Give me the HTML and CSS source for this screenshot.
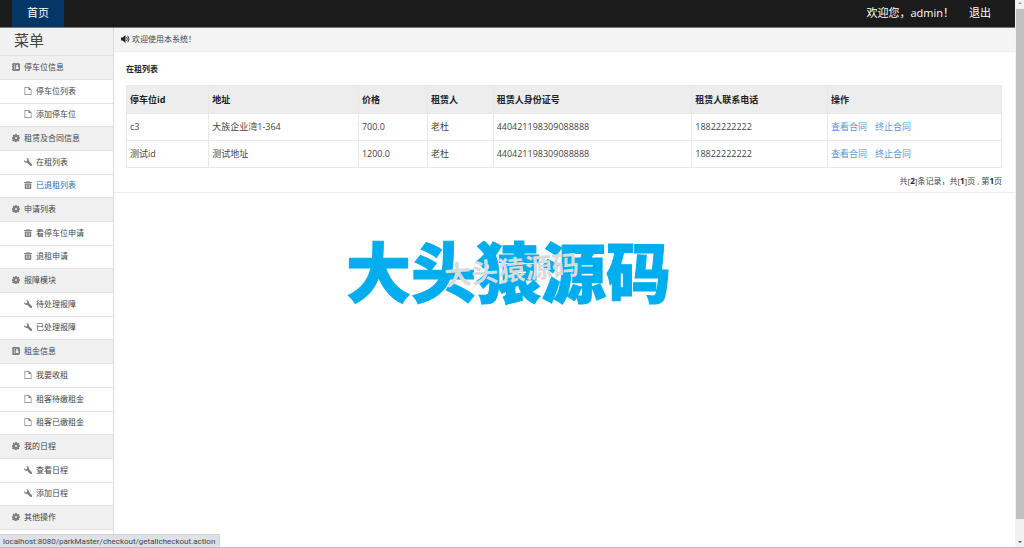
FILE: index.html
```html
<!DOCTYPE html>
<html lang="zh-CN">
<head>
<meta charset="utf-8">
<title>在租列表</title>
<link rel="stylesheet" href="styles.css">
</head>
<body>
<svg class="defs" aria-hidden="true">
  <symbol id="book" viewBox="0 0 16 16"><path fill-rule="evenodd" d="M2 0h12l2 2v12l-2 2H2l-2-2v-2h2v-1H0V9h2V8H0V6h2V5H0V2zM5 2.500v11h1v-11zM10 3.500a2 2 0 0 1 1.200 3.600L13 8.500V12H7.500V8.500l1.500-1.400A2 2 0 0 1 10 3.500z"/></symbol>
  <symbol id="file" viewBox="0 0 16 16"><path fill-rule="evenodd" d="M1 0h9l5 5v11H1zM2.300 1.300v13.400h11.400V6H9V1.300z"/></symbol>
  <symbol id="cog" viewBox="0 0 16 16"><path fill-rule="evenodd" d="M6.500 0h3l.5 2 1.500.6L13.300 1.500l1.700 2-1 1.700.5 1.300 1.500.5v2.500l-1.700.6-.6 1.400 1 1.700-2 2-1.800-1-1.400.6-.5 1.700h-3l-.5-1.700-1.400-.6-1.800 1-2-2 1-1.700L.8 9.900 0 9.500V6.700l1.700-.5.6-1.400-1-1.700 2-2 1.700 1L6 2zM8 6a2 2 0 1 0 0 4 2 2 0 0 0 0-4z"/></symbol>
  <symbol id="wrench" viewBox="0 0 16 16"><path d="M4.500 0a5 5 0 0 1 5.300 6.200L15.500 12a2.300 2.300 0 0 1-3.300 3.300L6.200 9.700A5 5 0 0 1 0 4l3 2.800L6 6l.7-2.800z"/></symbol>
  <symbol id="trash" viewBox="0 0 16 16"><path fill-rule="evenodd" d="M5 0h6v2h5v2H0V2h5zM6.200 1.200V2h3.600v-.8zM1.500 5h13v10l-1 1h-11l-1-1zM4 7v7h1V7zM7.500 7v7h1V7zM11 7v7h1V7z"/></symbol>
  <symbol id="sound" viewBox="0 0 18 16"><path d="M0 5h3l6-5v16l-6-5H0z"/><path fill="none" stroke="currentColor" stroke-width="1.800" d="M11 4q3 4 0 8M13.500 1.500q5 6.500 0 13"/></symbol>
</svg>
<div class="page">
  <div class="app">
    <header class="topbar">
      <a class="home" href="#">首页</a>
      <span class="welcome">欢迎您，admin！</span>
      <a class="logout" href="#">退出</a>
    </header>
    <div class="body">
      <nav class="sidebar">
        <h1 class="menu-title">菜单</h1>
        <section class="group">
          <h2 class="group-title"><svg class="icon"><use href="#book"/></svg>停车位信息</h2>
          <a class="item" href="#"><svg class="icon"><use href="#file"/></svg>停车位列表</a>
          <a class="item" href="#"><svg class="icon"><use href="#file"/></svg>添加停车位</a>
        </section>
        <section class="group">
          <h2 class="group-title"><svg class="icon"><use href="#cog"/></svg>租赁及合同信息</h2>
          <a class="item" href="#"><svg class="icon"><use href="#wrench"/></svg>在租列表</a>
          <a class="item" href="#"><svg class="icon"><use href="#trash"/></svg><span class="current">已退租列表</span></a>
        </section>
        <section class="group">
          <h2 class="group-title"><svg class="icon"><use href="#cog"/></svg>申请列表</h2>
          <a class="item" href="#"><svg class="icon"><use href="#trash"/></svg>看停车位申请</a>
          <a class="item" href="#"><svg class="icon"><use href="#trash"/></svg>退租申请</a>
        </section>
        <section class="group">
          <h2 class="group-title"><svg class="icon"><use href="#cog"/></svg>报障模块</h2>
          <a class="item" href="#"><svg class="icon"><use href="#wrench"/></svg>待处理报障</a>
          <a class="item" href="#"><svg class="icon"><use href="#wrench"/></svg>已处理报障</a>
        </section>
        <section class="group">
          <h2 class="group-title"><svg class="icon"><use href="#book"/></svg>租金信息</h2>
          <a class="item" href="#"><svg class="icon"><use href="#file"/></svg>我要收租</a>
          <a class="item" href="#"><svg class="icon"><use href="#file"/></svg>租客待缴租金</a>
          <a class="item" href="#"><svg class="icon"><use href="#file"/></svg>租客已缴租金</a>
        </section>
        <section class="group">
          <h2 class="group-title"><svg class="icon"><use href="#cog"/></svg>我的日程</h2>
          <a class="item" href="#"><svg class="icon"><use href="#wrench"/></svg>查看日程</a>
          <a class="item" href="#"><svg class="icon"><use href="#wrench"/></svg>添加日程</a>
        </section>
        <section class="group">
          <h2 class="group-title"><svg class="icon"><use href="#cog"/></svg>其他操作</h2>
        </section>
      </nav>
      <main class="main">
        <div class="notice"><svg class="icon sound"><use href="#sound"/></svg>欢迎使用本系统！</div>
        <section class="panel">
          <h2 class="panel-title">在租列表</h2>
          <table class="list">
            <colgroup><col class="c-id"><col class="c-addr"><col class="c-price"><col class="c-name"><col class="c-card"><col class="c-phone"><col></colgroup>
            <thead>
              <tr><th>停车位id</th><th>地址</th><th>价格</th><th>租赁人</th><th>租赁人身份证号</th><th>租赁人联系电话</th><th>操作</th></tr>
            </thead>
            <tbody>
              <tr><td>c3</td><td>大族企业湾1-364</td><td>700.0</td><td>老杜</td><td>440421198309088888</td><td>18822222222</td><td><a class="action" href="#">查看合同</a><a class="action" href="#">终止合同</a></td></tr>
              <tr><td>测试id</td><td>测试地址</td><td>1200.0</td><td>老杜</td><td>440421198309088888</td><td>18822222222</td><td><a class="action" href="#">查看合同</a><a class="action" href="#">终止合同</a></td></tr>
            </tbody>
          </table>
          <p class="pager">共[<b>2</b>]条记录，共[<b>1</b>]页 , 第<b>1</b>页</p>
        </section>
      </main>
    </div>
  </div>
  <div class="scrollbar" aria-hidden="true">
    <span class="arrow up"></span>
    <span class="thumb"></span>
    <span class="arrow down"></span>
  </div>
  <div class="watermark">大头猿源码<span class="watermark-small">大头猿源码</span></div>
  <div class="status">localhost:8080/parkMaster/checkout/getallcheckout.action</div>
</div>
</body>
</html>
```

FILE: styles.css
```css
* { box-sizing: border-box; }
body {
  margin: 0;
  font: 9px/12px "Open Sans", "Noto Sans CJK SC", sans-serif;
  color: #444;
  background: #fff;
}
a { color: inherit; text-decoration: none; }
h1, h2, p { margin: 0; }
.defs { position: absolute; width: 0; height: 0; }
.page {
  position: relative;
  display: flex;
  height: 100vh;
  overflow: hidden;
  border-bottom: 1px solid #b4bfc4;
}
.app { flex: 1; display: flex; flex-direction: column; min-width: 0; }

.topbar {
  display: flex;
  align-items: stretch;
  height: 28px;
  padding: 0 24px 0 12px;
  background: #1b1b1b;
  border-bottom: 1px solid #777;
  color: #fff;
  font-size: 11px;
  line-height: 26px;
}
.home { width: 52px; background: #043767; text-align: center; }
.welcome { margin-left: auto; }
.logout { margin-left: 15px; }

.body { flex: 1; display: flex; min-height: 0; }
.sidebar {
  width: 114px;
  flex: none;
  border-right: 1px solid #ddd;
  overflow: hidden;
  font-size: 8px;
}
.menu-title {
  height: 27px;
  padding-left: 14px;
  background: #f1f1f1;
  font-size: 15px;
  font-weight: 400;
  line-height: 25px;
}
.group-title, .item {
  display: flex;
  align-items: center;
  height: 24px;
  gap: 4px;
  padding-bottom: 2px;
  border-top: 1px solid #e2e2e2;
  font-size: inherit;
  font-weight: 400;
}
.group-title { padding-left: 12px; background: #f0f0f0; }
.item { padding-left: 24px; }
.item:last-child { height: 23px; }
.group:last-child { border-bottom: 1px solid #e2e2e2; }
.current { color: #2b6cb5; }
.icon { width: 8px; height: 8px; fill: #808080; flex: none; }

.main { flex: 1; min-width: 0; }
.notice {
  display: flex;
  align-items: center;
  gap: 2px;
  height: 24px;
  padding: 0 7px 2px;
  background: #f4f4f4;
  border-bottom: 1px solid #eee;
  font-size: 8px;
}
.sound { width: 9px; fill: #222; color: #222; }
.panel {
  padding: 11px 13px 5px 12px;
  border-bottom: 1px solid #eee;
}
.panel-title { margin-bottom: 10px; font-size: 8px; line-height: 12px; color: #222; }
.list { width: 100%; table-layout: fixed; border-collapse: collapse; }
.list th, .list td {
  height: 27px;
  padding: 0 3px;
  border: 1px solid #e8e8e8;
  text-align: left;
  white-space: nowrap;
}
.list th { height: 28px; background: #ededed; color: #222; }
.c-id { width: 9.4%; }
.c-addr { width: 17.1%; }
.c-price { width: 7.9%; }
.c-name { width: 7.5%; }
.c-card { width: 22.7%; }
.c-phone { width: 15.5%; }
.action { margin-right: 8px; color: #5a96cf; }
.pager { margin-top: 7px; text-align: right; font-size: 8px; }
.pager b { color: #222; }

.scrollbar {
  width: 9px;
  flex: none;
  display: flex;
  flex-direction: column;
  align-items: center;
  background: #f1f1f1;
}
.thumb { flex: 1; width: 8px; margin: 5px 0 22px; background: #c1c1c1; }
.arrow { border: 2px solid transparent; }
.up { border-bottom-color: #999; }
.down { border-top-color: #555; margin-bottom: 2px; }

.watermark {
  position: absolute;
  left: 346px;
  top: 234px;
  color: #00adee;
  font: 900 65px/70px "Noto Sans CJK SC", sans-serif;
  -webkit-text-stroke: 1px #00adee;
  white-space: nowrap;
}
.watermark-small {
  position: absolute;
  left: 98px;
  top: 18px;
  color: #d9dadb;
  font-size: 27px;
  font-weight: 700;
  line-height: 34px;
  -webkit-text-stroke: 0;
  transform: rotate(-5deg);
}
.status {
  position: absolute;
  left: 0;
  bottom: 0;
  height: 13px;
  padding: 0 4px 0 3px;
  background: #dee1e6;
  border-top: 1px solid #d0d4da;
  border-right: 1px solid #d0d4da;
  font-family: Roboto, sans-serif;
  font-size: 8px;
  line-height: 13px;
}
```
